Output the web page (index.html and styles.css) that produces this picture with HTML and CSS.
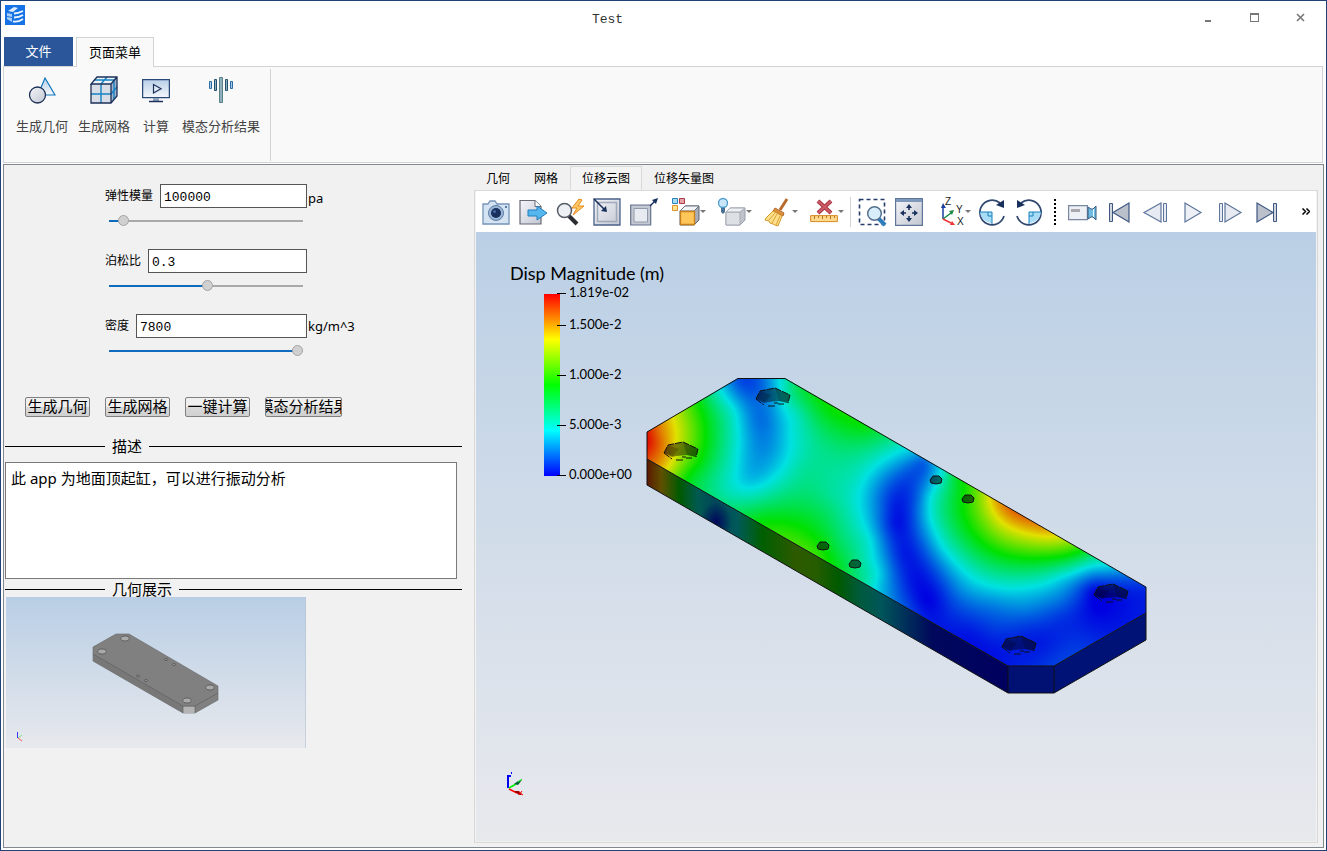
FILE: index.html
```
<!DOCTYPE html>
<html lang="zh-CN">
<head>
<meta charset="utf-8">
<title>Test</title>
<link rel="stylesheet" href="styles.css">
</head>
<body>
<div class="window">
  <header class="titlebar">
    <svg class="logo" viewBox="0 0 20 20" aria-hidden="true">
      <rect width="20" height="20" fill="#1673e6"/>
      <path d="M3 6l6-4 4 1-5 4z" fill="#dcebff"/>
      <path d="M2 8l5 1v8l-5-3z" fill="#a9cdfb"/>
      <path d="M9 8.500q4 0 9-2.500M9 12.500q5 0 9-2.500M8 16.500q5 1 10-2.500" stroke="#eef6ff" stroke-width="1.800" fill="none"/>
      <path d="M2 11.500l5 1" stroke="#1673e6"/>
    </svg>
    <h1 class="title">Test</h1>
    <div class="controls">
      <button type="button" aria-label="最小化"><svg viewBox="0 0 12 12"><path d="M2 8h6v2H2z" fill="#777"/></svg></button>
      <button type="button" aria-label="最大化"><svg viewBox="0 0 12 12"><path d="M1 1h9v9H1zM2 3v6h7V3z" fill="#777" fill-rule="evenodd"/></svg></button>
      <button type="button" aria-label="关闭"><svg viewBox="0 0 12 12"><path d="M2 2l7 7M9 2L2 9" stroke="#777" stroke-width="1.600"/></svg></button>
    </div>
  </header>

  <nav class="menu-tabs" role="tablist">
    <button type="button" class="menu-tab file">文件</button>
    <button type="button" class="menu-tab active" role="tab" aria-selected="true">页面菜单</button>
  </nav>

  <section class="ribbon">
    <div class="ribbon-group">
      <button type="button" class="ribbon-item">
        <svg viewBox="0 0 28 28"><defs><linearGradient id="soft" x2="0" y2="1"><stop stop-color="#b9cfe8"/><stop offset="1" stop-color="#f4f7fb"/></linearGradient><linearGradient id="gray" x2="1" y2="1"><stop stop-color="#f4f5f9"/><stop offset="1" stop-color="#c3c7d2"/></linearGradient></defs>
          <path d="M17 2l10 17H10z" fill="url(#soft)" stroke="#1178bd" stroke-width="1.200"/><circle cx="9.500" cy="19" r="8" fill="url(#gray)" stroke="#1d3158" stroke-width="1.300"/></svg>
        <span>生成几何</span>
      </button>
      <button type="button" class="ribbon-item">
        <svg viewBox="0 0 28 28"><path d="M1 8h20v19H1z" fill="#d9dde5"/><path d="M1 8l6-7h20l-6 7z" fill="#edf1f7"/><path d="M21 8l6-7v19l-6 7z" fill="#9fb2c9"/>
          <path d="M1 18h20l6-7M11 8v19M11 8l6-7M4 4h20v19" fill="none" stroke="#1482c4" stroke-width="1.400"/><path d="M1 8v19h20l6-7V1H7L1 8h20l6-7M21 8v19" fill="none" stroke="#1d3158" stroke-width="1.300"/></svg>
        <span>生成网格</span>
      </button>
      <button type="button" class="ribbon-item">
        <svg viewBox="0 0 28 28"><path d="M.6 3.600h26.800v18H.6z" fill="url(#soft)" stroke="#2c4a78" stroke-width="1.300"/><path d="M11.500 8.500v8.500l7.500-4.200z" fill="#dfe9f5" stroke="#1d3158" stroke-width="1.200"/><path d="M11 22h6v3h-6z" fill="#8ea3bd"/><path d="M7 25.500h14" stroke="#1d3158" stroke-width="1.500"/></svg>
        <span>计算</span>
      </button>
      <button type="button" class="ribbon-item">
        <svg viewBox="0 0 28 28"><g fill="#8fb0ba" stroke="#24506f"><path d="M12.500 1.500h3v25h-3z" stroke="#5a8187"/><path d="M7.500 3.500h2v11h-2zM18.500 3.500h2v11h-2z"/><path d="M2.500 5.500h2v7h-2zM23.500 5.500h2v7h-2z" fill="#a9cbe8" stroke="#2b6ca6"/></g></svg>
        <span>模态分析结果</span>
      </button>
    </div>
  </section>

  <main class="workspace">
    <section class="side">
      <form class="params">
        <div class="param">
          <div class="field"><label for="modulus">弹性模量</label><input id="modulus" type="text" value="100000"></div><span class="unit low">pa</span>
          <input type="range" aria-label="弹性模量" min="0" max="100" value="5" style="--fill:8%">
        </div>
        <div class="param">
          <div class="field"><label for="poisson">泊松比</label><input id="poisson" type="text" value="0.3"></div><span class="unit"></span>
          <input type="range" aria-label="泊松比" min="0" max="100" value="51" style="--fill:51%">
        </div>
        <div class="param">
          <div class="field"><label for="density">密度</label><input id="density" type="text" value="7800"></div><span class="unit">kg/m^3</span>
          <input type="range" aria-label="密度" min="0" max="100" value="100" style="--fill:98%">
        </div>
      </form>
      <div class="actions">
        <button type="button">生成几何</button>
        <button type="button">生成网格</button>
        <button type="button">一键计算</button>
        <button type="button" class="wide"><span>模态分析结果</span></button>
      </div>
      <h2 class="divider first"><label for="description">描述</label></h2>
      <textarea id="description" class="description" spellcheck="false">此 app 为地面顶起缸，可以进行振动分析</textarea>
      <h2 class="divider second">几何展示</h2>
      <svg class="preview" viewBox="0 0 300 151" role="img" aria-label="几何展示">
        <defs><linearGradient id="sky" x2="0" y2="1"><stop stop-color="#b9cee5"/><stop offset="1" stop-color="#e7e9ed"/></linearGradient></defs>
        <path d="M0 0h300v151H0z" fill="url(#sky)"/><path d="M299.500 0v151" stroke="#b5c3d3" opacity=".6"/>
        <path d="M87 50l23-13h13l89 52v14l-23 13h-12L87 64z" fill="#808080" stroke="#666" stroke-width=".6"/>
        <path d="M87 57l90 52v7L87 64z" fill="#787878"/><path d="M177 109.500h12v6.500h-12z" fill="#b4b4b4"/>
        <path d="M87 57l90 52h12l23-13M177 109v7M189 109v7" fill="none" stroke="#5a5a5a" stroke-width=".6"/>
        <g fill="#aaa" stroke="#5f5f5f"><ellipse cx="119" cy="41.500" rx="4.200" ry="2.500"/><ellipse cx="96" cy="54.500" rx="4.200" ry="2.500"/><ellipse cx="204" cy="90.500" rx="4.200" ry="2.500"/><ellipse cx="181" cy="103.500" rx="4.200" ry="2.500"/></g>
        <g fill="#999" stroke="#4c4c4c" stroke-width=".7"><ellipse cx="160" cy="62.500" rx="1.600" ry="1"/><ellipse cx="168" cy="67.500" rx="1.600" ry="1"/><ellipse cx="132" cy="79" rx="1.600" ry="1"/><ellipse cx="140" cy="83.500" rx="1.600" ry="1"/></g>
        <path d="M11.500 141v-6" stroke="#3838ff"/><path d="M12 141l4-3" stroke="#6fe48a"/><path d="M12 141l4 3" stroke="#f55"/>
      </svg>
    </section>

    <section class="result">
      <nav class="view-tabs" role="tablist">
        <button type="button" role="tab">几何</button>
        <button type="button" role="tab">网格</button>
        <button type="button" role="tab" class="active" aria-selected="true">位移云图</button>
        <button type="button" role="tab">位移矢量图</button>
      </nav>
      <div class="frame">
        <div class="toolbar" role="toolbar">
          <button type="button" class="tool" aria-label="截图"><svg viewBox="0 0 28 28"><path d="M1 5h5l2-3h5l2 3h12v20H1z" transform="translate(0 1)" fill="#d5e4f3" stroke="#7593b8" stroke-width="1.300"/><circle cx="14" cy="15" r="7.500" fill="#9cb6d6" stroke="#5d7ca8"/><circle cx="14" cy="15" r="5" fill="#17305e"/><circle cx="12.500" cy="13.500" r="1.500" fill="#4469a3"/><circle cx="24" cy="9" r="1" fill="#31568a"/></svg></button>
          <button type="button" class="tool" aria-label="导出"><svg viewBox="0 0 28 28"><path d="M1 2.500h15l6 6V26H1z" fill="url(#gray)" stroke="#666b76" stroke-width="1.200"/><path d="M16 2.500v6h6" fill="#fff" stroke="#666b76"/><path d="M9 12h9V8l10 7-10 7v-4H9z" fill="#55b7ee" stroke="#227fbd"/></svg></button>
          <button type="button" class="tool" aria-label="快速缩放"><svg viewBox="0 0 28 28"><path d="M13 18l8 8" stroke="#2b2d33" stroke-width="4"/><circle cx="8.500" cy="12.500" r="7" fill="#edf1f5" stroke="#555b66" stroke-width="1.500"/><path d="M23 1l-7 9h5l-4 7 11-9h-6l4-6z" fill="#ffc763" stroke="#e58a1f"/></svg></button>
          <button type="button" class="tool" aria-label="适应窗口"><svg viewBox="0 0 28 28"><path d="M1 1h26v26H1z" fill="url(#gray)" stroke="#4b628a" stroke-width="1.300"/><path d="M4.500 4.500h19v19h-19z" fill="none" stroke="#a0a9b9" stroke-width="1.500"/><path d="M1 1l11 11" stroke="#19305c" stroke-width="1.500"/><path d="M14 14l-1-6-5 5z" fill="#19305c"/></svg></button>
          <button type="button" class="tool" aria-label="放大窗口"><svg viewBox="0 0 28 28"><path d="M.7 7h20v20H.7z" fill="#c3c8d2" stroke="#66738c" stroke-width="1.200"/><path d="M4 10.500h13.500V24H4z" fill="#e7eaf0" stroke="#929baa"/><path d="M20 8l5-5" stroke="#19305c" stroke-width="1.500"/><path d="M28 0l-2 6-4-4z" fill="#19305c"/></svg></button>
          <button type="button" class="tool drop" aria-label="着色"><svg viewBox="0 0 28 28"><path d="M.5.500h5v5h-5z" fill="#a8dcf5" stroke="#2a83b7"/><path d="M7.500.500h5v5h-5z" fill="#e8a2a6" stroke="#ab3c4a"/><path d="M.5 7.500h5v5h-5z" fill="#ffe38f" stroke="#df922b"/><path d="M8 13l5-5h14v14l-5 5H8z" fill="#a9adb7" stroke="#5f6472"/><path d="M8 13l5-5h14l-5 5z" fill="#f3f4f7" stroke="#6d7280"/><path d="M8.500 13.500h14v13h-14z" fill="#ffc65a" stroke="#c98119" stroke-width="1.300"/></svg><i></i></button>
          <button type="button" class="tool drop" aria-label="光照"><svg viewBox="0 0 28 28"><circle cx="5" cy="5" r="4.500" fill="#c8e7fa" stroke="#4b9bcb" stroke-width="1.300"/><path d="M3 10h4v4l-2 2-2-2z" fill="#4a7294"/><path d="M8 14l4-4h15v12l-5 5H8z" fill="#bfc4cc" stroke="#969ca6"/><path d="M8 14h14v13H8z" fill="#dde0e5" stroke="#a5aab4"/><path d="M8 14l4-4h15l-5 4z" fill="#eef0f3" stroke="#a5aab4"/></svg><i></i></button>
          <button type="button" class="tool drop" aria-label="清除"><svg viewBox="0 0 28 28"><path d="M23 1l-7 11" stroke="#b66c2e" stroke-width="3"/><path d="M11 10l9 5-1 3-10-5z" fill="#db903c" stroke="#b66c2e"/><path d="M9 13l9 5-4 10-3-1-2-1-3-1-1-2-4-1 1-2z" fill="#ffe08a" stroke="#d8992c"/><path d="M11 15l-6 7M13 16l-5 9M16 18l-4 9" stroke="#dba23b" fill="none"/></svg><i></i></button>
          <button type="button" class="tool drop" aria-label="删除标尺"><svg viewBox="0 0 28 28"><path d="M8 3l13 12M21 3L8 15" stroke="#a93542" stroke-width="4"/><path d="M8 3l13 12M21 3L8 15" stroke="#cc5b66" stroke-width="2"/><path d="M.6 17.600h26.800v6H.6z" fill="#ffd88b" stroke="#d68a27"/><path d="M4.500 18v3M8.500 18v2M12.500 18v3M16.500 18v2M20.500 18v3M24.500 18v2" stroke="#b9741e"/></svg><i></i></button>
          <span class="rule"></span>
          <button type="button" class="tool" aria-label="框选缩放"><svg viewBox="0 0 28 28"><path d="M1.500 1.500h25v25h-25z" fill="none" stroke="#263d69" stroke-width="1.600" stroke-dasharray="4 3"/><path d="M20 20l7 7" stroke="#2f7dbc" stroke-width="4"/><circle cx="16.500" cy="15.500" r="6.800" fill="#d8eefa" stroke="#55708e" stroke-width="1.500"/></svg></button>
          <button type="button" class="tool" aria-label="平移"><svg viewBox="0 0 28 28"><path d="M.6.6h26.800v26.800H.6z" fill="url(#gray)" stroke="#5f7698" stroke-width="1.200"/><path d="M1 1h26v3H1z" fill="#7e98bb"/><path d="M14 8v4m0 6v4M7 15h4m6 0h4" stroke="#19305c" stroke-width="1.600"/><path d="M14 6l-3 4h6zM14 24l-3-4h6zM5 15l4-3v6zM23 15l-4-3v6z" fill="#19305c"/></svg></button>
          <button type="button" class="tool drop" aria-label="视图方向"><svg viewBox="0 0 28 28"><path d="M6 21V8" stroke="#1d3f9e" stroke-width="1.500"/><path d="M6 5l-2 5h5z" fill="#1d3f9e"/><path d="M6 21l8-6" stroke="#1a8a43" stroke-width="1.500"/><path d="M17 12l-5 1 3 4z" fill="#1a8a43"/><path d="M6 21l8 4" stroke="#e33" stroke-width="1.500"/><path d="M18 27l-3-4-2 4z" fill="#e33"/><g class="axis"><text x="8" y="7">Z</text><text x="19" y="15">Y</text><text x="20" y="27">X</text></g></svg><i></i></button>
          <button type="button" class="tool" aria-label="顺时针旋转"><svg viewBox="0 0 28 28"><path d="M22 5A12.300 12.300 0 1 0 26 18" fill="none" stroke="#30476f" stroke-width="1.700"/><path d="M26 2v8l-8-3z" fill="#19305c"/><path d="M2 14h12v11A12 12 0 0 1 2 14z" fill="#a8dcf7"/><path d="M1 14h13v12M10 14v4h4" fill="none" stroke="#1880bd"/></svg></button>
          <button type="button" class="tool" aria-label="逆时针旋转"><svg viewBox="0 0 28 28"><path d="M2 18A12.300 12.300 0 1 0 6 5" fill="none" stroke="#30476f" stroke-width="1.700"/><path d="M2 2v8l8-3z" fill="#19305c"/><path d="M26 14H14v11A12 12 0 0 0 26 14z" fill="#a8dcf7"/><path d="M27 14H14v12M18 14v4h-4" fill="none" stroke="#1880bd"/></svg></button>
          <span class="grip"></span>
          <button type="button" class="tool" aria-label="录像"><svg viewBox="0 0 28 28"><path d="M.6 7.600h18.800v14H.6z" fill="#edf0f5" stroke="#7987a1" stroke-width="1.200"/><path d="M3 11h9v3H3z" fill="#a9a9ad"/><path d="M20 9l3 2h2l3-3v14l-3-3h-2l-3 2z" fill="#6fbbe2" stroke="#36597f"/><path d="M25.500 11v8" stroke="#e9f6fd"/></svg></button>
          <button type="button" class="tool" aria-label="第一帧"><svg viewBox="0 0 28 28"><path d="M4.500 5.500h3v18h-3z" fill="#d0d4dc" stroke="#3e5783"/><path d="M24 5v19L8 14.500z" fill="#bbc1cb" stroke="#3e5783" stroke-width="1.200"/></svg></button>
          <button type="button" class="tool" aria-label="上一帧"><svg viewBox="0 0 28 28"><path d="M21.500 5.500h3v18h-3z" fill="#e7eaf0" stroke="#5e759b"/><path d="M19 5v19L2 14.500z" fill="#e7eaf0" stroke="#5e759b" stroke-width="1.200"/></svg></button>
          <button type="button" class="tool" aria-label="播放"><svg viewBox="0 0 28 28"><path d="M6 5v19l16-9.500z" fill="#edf1f6" stroke="#5e759b" stroke-width="1.200"/></svg></button>
          <button type="button" class="tool" aria-label="下一帧"><svg viewBox="0 0 28 28"><path d="M3.500 5.500h3v18h-3z" fill="#e7eaf0" stroke="#5e759b"/><path d="M9 5v19l16-9.500z" fill="#e7eaf0" stroke="#5e759b" stroke-width="1.200"/></svg></button>
          <button type="button" class="tool" aria-label="最后一帧"><svg viewBox="0 0 28 28"><path d="M20.500 5.500h3v18h-3z" fill="#d0d4dc" stroke="#3e5783"/><path d="M4 5v19l16-9.500z" fill="#bbc1cb" stroke="#3e5783" stroke-width="1.200"/></svg></button>
          <button type="button" class="more" aria-label="更多"><svg viewBox="0 0 8 7"><path d="M.5.500l3 3-3 3M4.500.500l3 3-3 3" fill="none" stroke="#000" stroke-width="1.500"/></svg></button>
        </div>
        <div class="viewport">
          <svg class="legend" viewBox="0 0 170 220" role="img" aria-label="Disp Magnitude">
            <defs><linearGradient id="rainbow" x2="0" y2="1"><stop stop-color="#f00"/><stop offset=".25" stop-color="#ff0"/><stop offset=".5" stop-color="#0f0"/><stop offset=".75" stop-color="#0ff"/><stop offset="1" stop-color="#00f"/></linearGradient></defs>
            <text class="legend-title" x="0" y="15">Disp Magnitude (m)</text>
            <path d="M34 29h16v182H34z" fill="url(#rainbow)"/>
            <path d="M47 28.500h9M47 60.500h9M47 110.500h9M47 160.500h9M47 210.500h9" stroke="#000"/>
            <g class="legend-tick"><text x="59" y="32">1.819e-02</text><text x="59" y="64">1.500e-2</text><text x="59" y="114">1.000e-2</text><text x="59" y="164">5.000e-3</text><text x="59" y="214">0.000e+00</text></g>
          </svg>
          <div class="plate">
            <canvas id="field" width="501" height="318"></canvas>
            <svg viewBox="646 377 501 318" aria-hidden="true">
              <defs>
                <linearGradient id="edge" gradientUnits="userSpaceOnUse" x1="647" x2="1008" y1="0" y2="0">
                  <stop stop-color="#5a1900"/><stop offset=".04" stop-color="#5f5000"/><stop offset=".09" stop-color="#005a00"/><stop offset=".14" stop-color="#005a50"/><stop offset=".19" stop-color="#00465a"/><stop offset=".25" stop-color="#005a5a"/><stop offset=".32" stop-color="#005f00"/><stop offset=".41" stop-color="#2d5a00"/><stop offset=".47" stop-color="#265c00"/><stop offset=".53" stop-color="#005a00"/><stop offset=".59" stop-color="#005a3c"/><stop offset=".65" stop-color="#00555a"/><stop offset=".72" stop-color="#002d5a"/><stop offset=".79" stop-color="#00085c"/><stop offset="1" stop-color="#00005f"/>
                </linearGradient>
                <radialGradient id="spot"><stop stop-color="#00085a"/><stop offset="1" stop-color="#00085a" stop-opacity="0"/></radialGradient>
                <clipPath id="edge-clip"><path d="M647 459l361 207v27L647 485z"/></clipPath>
                <g id="socket">
                  <path d="M-13-7L2-10 17-3 15 5 6 3-5 4-9 5-17 1z" fill="#000" fill-opacity=".45"/>
                  <path d="M-13-7l11 4-6 7-9-3zM2-10l4 13 9 2 2-8z" fill="#000" fill-opacity=".2"/>
                  <path d="M-17 1l4-8L2-10 17-3l-2 8M-17 1l8 6M-5 8h8m2-2h6m-10-1h4" fill="none" stroke="#111" stroke-dasharray="7 1"/>
                </g>
                <path id="pin" d="M-6 0l3-4h6l3 3-1 4-5 1-5-1z" fill="#000" fill-opacity=".55" stroke="#111"/>
              </defs>
              <path d="M647 459l361 207v27L647 485z" fill="url(#edge)"/>
              <ellipse cx="716" cy="522" rx="16" ry="20" fill="url(#spot)" clip-path="url(#edge-clip)"/>
              <path d="M1008 666h46v27h-46z" fill="#001073"/>
              <path d="M1054 666l92-53v27l-92 53z" fill="#001276"/>
              <path d="M647 459l361 207h46l92-53M1008 666v27M1054 666v27" fill="none" stroke="#111"/>
              <path d="M647 432v53l361 208h46l92-53v-53L785 378.500h-47z" fill="none" stroke="#111"/>
              <use href="#socket" x="681" y="452"/><use href="#socket" x="773" y="398"/><use href="#socket" x="1111" y="594"/><use href="#socket" x="1019" y="646"/>
              <use href="#pin" x="823" y="546"/><use href="#pin" x="855" y="564"/><use href="#pin" x="936" y="480"/><use href="#pin" x="968" y="499"/>
            </svg>
          </div>
          <svg class="triad" viewBox="0 0 20 28" aria-hidden="true"><path d="M3 17V6" stroke="#00e" stroke-width="2"/><path d="M2 5h4M6 2h1" stroke="#00e" stroke-width="2"/><path d="M4 17l7-4" stroke="#0e0" stroke-width="1.500"/><path d="M9 13l4-3 4-1-4 5z" fill="#063"/><path d="M13 11l4-3" stroke="#0f0"/><path d="M4 18l8 4" stroke="#f00" stroke-width="1.500"/><path d="M9 20l5 4h3l-3-4z" fill="#900"/><path d="M14 21l4 3M17 20l-3 4" stroke="#f00"/></svg>
        </div>
      </div>
    </section>
  </main>
</div>
<script src="field.js"></script>
</body>
</html>
```
FILE: styles.css
```
* { box-sizing: border-box; }
body {
  margin: 0;
  background: #fff;
  color: #000;
  font: 13px/18px "Noto Sans", "Noto Sans CJK SC", sans-serif;
}
button { margin: 0; padding: 0; border: 0; background: none; color: inherit; font: inherit; }
svg { display: block; }

.window {
  display: flex;
  flex-direction: column;
  min-height: 100vh;
  padding: 0 2px 2px;
  border: 1px solid #1f4277;
}

.titlebar { display: flex; align-items: flex-start; height: 36px; }
.logo { width: 20px; height: 20px; margin: 4px 0 0 2px; }
.title {
  flex: 1;
  margin: 10px 0 0 4px;
  color: #333;
  text-align: center;
  font: 13px/18px "Liberation Mono", monospace;
}
.controls { display: flex; }
.controls button { width: 46px; height: 36px; padding: 11px 17px 13px; }
.controls svg { width: 12px; height: 12px; }

.menu-tabs { display: flex; gap: 3px; padding-left: 1px; }
.menu-tab { height: 29px; padding: 0 12px 2px; }
.menu-tab.file { width: 69px; background: #2b579a; color: #fff; }
.menu-tab.active {
  position: relative;
  height: 30px;
  margin-bottom: -1px;
  border: 1px solid #d3d3d3;
  border-bottom: 0;
  background: #f9f9f9;
}

.ribbon {
  height: 97px;
  margin-right: 1px;
  padding: 2px 7px;
  border: 1px solid #d3d3d3;
  background: #f9f9f9;
}
.ribbon-group {
  display: inline-flex;
  height: 92px;
  padding-right: 5px;
  border-right: 1px solid #d3d3d3;
}
.ribbon-item {
  display: flex;
  flex-direction: column;
  align-items: center;
  gap: 13px;
  min-width: 42px;
  padding: 7px 5px 0;
  color: #444;
}
.ribbon-item svg { width: 28px; height: 28px; }

.workspace {
  display: flex;
  flex: 1;
  margin-top: 1px;
  border: 1px solid #828790;
  background: #f1f1f1;
}
.side { width: 470px; padding: 19px 12px 0 1px; }
.params { display: flex; flex-direction: column; gap: 22px; padding-left: 100px; }
.param { display: grid; grid-template-columns: 202px 1fr; row-gap: 6px; column-gap: 1px; }
.field { display: flex; gap: 7px; font-size: 12px; line-height: 24px; }
.field input {
  flex: 1;
  min-width: 0;
  height: 24px;
  padding: 2px 3px 0;
  border: 1px solid #555;
  background: #fff;
  font: 13px/20px "Liberation Mono", monospace;
}
.unit { line-height: 24px; }
.unit.low { padding-top: 4px; line-height: 20px; }
.param input[type="range"] {
  appearance: none;
  width: 194px;
  height: 13px;
  margin: 0 4px;
  background: linear-gradient(90deg, #0f6cbd var(--fill), #a9a9a9 var(--fill)) center / 100% 2px no-repeat;
}
.param input[type="range"]::-webkit-slider-thumb {
  appearance: none;
  width: 11px;
  height: 11px;
  border: 1px solid #a5a5a5;
  border-radius: 50%;
  background: #d0d0d0;
}

.actions { display: flex; gap: 15px; margin: 40px 0 22px; padding-left: 20px; }
.actions button {
  display: flex;
  justify-content: center;
  width: 65px;
  height: 20px;
  overflow: hidden;
  border: 1px solid #808080;
  border-radius: 2px;
  background: linear-gradient(#f0f0f0 50%, #dadada 50%, #d0d0d0);
  font-size: 15px;
  line-height: 16px;
  white-space: nowrap;
}
.actions .wide { width: 77px; }

.divider {
  display: flex;
  align-items: center;
  gap: 7px;
  margin: 0;
  font-size: 15px;
  font-weight: 400;
  line-height: 15px;
}
.divider::before { content: ""; width: 100px; height: 1px; background: #000; }
.divider::after { content: ""; flex: 1; height: 1px; background: #000; }
.divider.first { margin-bottom: 8px; }
.divider.second { margin-top: 3px; }
.description {
  display: block;
  width: calc(100% - 5px);
  height: 117px;
  padding: 5px;
  border: 1px solid #7a7a7a;
  background: #fff;
  resize: none;
  font: 15px/20px "Noto Sans", "Noto Sans CJK SC", sans-serif;
}
.preview { width: 300px; height: 151px; margin-left: 1px; }

.result { display: flex; flex: 1; flex-direction: column; min-width: 0; padding: 1px 5px 4px 0; }
.view-tabs { display: flex; height: 24px; }
.view-tabs button {
  padding: 0 11px;
  border: 1px solid transparent;
  border-bottom: 0;
  font-size: 12px;
}
.view-tabs .active { border-color: #d9d9d9; background: #f4f4f4; }
.frame { display: flex; flex: 1; flex-direction: column; padding: 0 1px 1px; border: 1px solid #d9d9d9; }
.toolbar { display: flex; align-items: center; height: 41px; padding-left: 1px; background: #fff; }
.tool { display: flex; flex: none; align-items: center; justify-content: center; width: 37px; height: 36px; }
.tool svg { flex: none; width: 28px; height: 28px; overflow: visible; }
.tool.drop { justify-content: flex-start; width: 46px; padding-left: 10px; }
.tool.drop i { border: 3px solid transparent; border-top-color: #777; border-bottom: 0; }
.axis { font: 10px "Liberation Sans", sans-serif; fill: #222; }
.rule { width: 1px; height: 30px; margin: 0 2px 0 4px; background: #d3d3d3; }
.grip { width: 2px; height: 26px; margin: 0 7px; background: repeating-linear-gradient(#000 0 2px, transparent 2px 4px); }
.more { width: 8px; margin: 0 6px 0 auto; }
.more svg { width: 8px; height: 7px; }

.viewport { position: relative; flex: 1; overflow: hidden; background: linear-gradient(#bacfe5, #e8e9ed); }
.legend { position: absolute; left: 34px; top: 33px; width: 170px; height: 220px; overflow: visible; }
.legend-title { font: 18px Lato, sans-serif; }
.legend-tick { font: 13px Lato, sans-serif; }
.plate { position: absolute; left: calc(50% - 250px); top: calc(50% - 160px); width: 501px; height: 318px; }
.plate canvas { display: block; }
.plate svg { position: absolute; inset: 0; width: 501px; height: 318px; }
.triad { position: absolute; left: 29px; bottom: 42px; width: 20px; height: 28px; }
```
FILE: field.js
```
// Displacement magnitude on the top face: nodes as [x, y, value], value 0..1 of the maximum.
const nodes = [
  [650,440,.97],[647,457,.93],[658,432,.88],[662,450,.86],[675,427,.75],[670,463,.75],[673,443,.77],
  [698,403,.5],[705,430,.5],[698,463,.5],[687,477,.5],[722,392,.25],[733,410,.26],[737,437,.26],[733,467,.27],[720,473,.33],[727,490,.3],
  [740,380,.08],[747,385,.08],[763,387,.12],[760,420,.12],[763,447,.15],[753,473,.19],[745,483,.23],
  [777,383,.23],[785,410,.25],[790,433,.25],[786,460,.25],[772,478,.25],[797,413,.3],[807,433,.32],[803,470,.33],[777,493,.34],
  [797,393,.39],[823,410,.47],[843,417,.5],[863,427,.48],[883,437,.38],[837,433,.42],[830,460,.34],[863,453,.34],
  [830,493,.33],[853,480,.29],[857,507,.26],[870,540,.25],[877,573,.25],
  [780,507,.42],[747,503,.35],[763,520,.49],[790,523,.5],[797,540,.56],[817,553,.55],[810,533,.5],[837,547,.42],[843,563,.43],[843,533,.36],[863,580,.33],[863,560,.31],[827,510,.38],
  [860,447,.37],[870,463,.28],[897,447,.28],[893,467,.17],[910,455,.19],[923,463,.1],[877,480,.18],[880,510,.12],[887,560,.14],
  [900,483,.07],[893,503,.04],[895,523,.02],[903,553,.03],[913,577,.02],[927,600,0],[950,613,.05],[970,630,.03],[993,650,.02],[893,590,.13],[877,587,.23],[910,607,.07],
  [918,497,.12],[915,530,.09],[932,563,.1],[960,590,.15],[993,603,.15],[1027,607,.15],[1060,597,.14],
  [935,470,.2],[928,497,.23],[930,517,.25],[943,547,.25],[963,570,.25],[993,586,.25],[1027,587,.25],[1060,577,.25],[1107,567,.22],[943,473,.28],
  [953,477,.42],[963,487,.5],[960,513,.48],[973,533,.5],[1000,553,.5],[1033,558,.5],[1073,553,.5],[1090,556,.37],
  [977,490,.62],[983,520,.62],[988,497,.74],[997,517,.75],[1020,530,.76],[1060,538,.72],[995,499,.81],[1010,508,.89],[1033,521,.87],[1047,530,.81],[1077,547,.56],
  [993,630,.06],[1027,630,.05],[1060,617,.06],[1093,590,.01],[1080,597,.06],[1110,577,.11],[1143,587,.05],[1113,610,.01],[1143,610,.03],[1060,660,.07],[1077,643,.06],[1047,663,.06],[1010,663,.03],[1043,643,.03]
].map(([x, y, v]) => [x / 100, y / 100, v]);

const kernel = d2 => (d2 > 0 ? d2 * Math.log(d2) : 0);
const basis = (x, y) => [...nodes.map(([a, b]) => kernel((a - x) ** 2 + (b - y) ** 2)), 1, x, y];

// Thin-plate spline weights by Gaussian elimination with pivoting.
function solve() {
  const n = nodes.length + 3;
  const m = nodes.map(([x, y, v], i) => {
    const row = [...basis(x, y), v];
    row[i] += 0.003;
    return row;
  });
  for (let k = 0; k < 3; k++) m.push([...nodes.map(p => (k ? p[k - 1] : 1)), 0, 0, 0, 0]);
  for (let c = 0; c < n; c++) {
    let p = c;
    for (let r = c + 1; r < n; r++) if (Math.abs(m[r][c]) > Math.abs(m[p][c])) p = r;
    [m[c], m[p]] = [m[p], m[c]];
    for (let r = 0; r < n; r++) {
      if (r === c) continue;
      const f = m[r][c] / m[c][c];
      for (let k = c; k <= n; k++) m[r][k] -= f * m[c][k];
    }
  }
  return m.map((row, i) => row[n] / row[i]);
}

const weights = solve();
const canvas = document.getElementById("field");
const ctx = canvas.getContext("2d");
const { width, height } = canvas;
const step = 4;
const cols = Math.ceil(width / step) + 2;
const rows = Math.ceil(height / step) + 2;
const grid = [];
for (let j = 0; j < rows; j++) {
  for (let i = 0; i < cols; i++) {
    const b = basis((646 + i * step) / 100, (377 + j * step) / 100);
    grid.push(b.reduce((sum, v, k) => sum + v * weights[k], 0));
  }
}

const image = ctx.createImageData(width, height);
const clamp = v => Math.max(0, Math.min(1, v));
for (let y = 0; y < height; y++) {
  for (let x = 0; x < width; x++) {
    const i = Math.floor(x / step), j = Math.floor(y / step);
    const u = x / step - i, v = y / step - j, g = j * cols + i;
    const s = clamp((grid[g] * (1 - u) + grid[g + 1] * u) * (1 - v) + (grid[g + cols] * (1 - u) + grid[g + cols + 1] * u) * v) * 4;
    const o = (y * width + x) * 4;
    image.data[o] = 225 * clamp(s - 2);
    image.data[o + 1] = 225 * Math.min(clamp(s), clamp(4 - s));
    image.data[o + 2] = 225 * clamp(2 - s);
    image.data[o + 3] = 255;
  }
}
const buffer = document.createElement("canvas");
buffer.width = width;
buffer.height = height;
buffer.getContext("2d").putImageData(image, 0, 0);
const outline = [[647,432],[738,378],[785,378],[1146,587],[1146,613],[1054,666],[1008,666],[647,459]];
ctx.beginPath();
outline.forEach(([x, y]) => ctx.lineTo(x - 646, y - 377));
ctx.clip();
ctx.drawImage(buffer, 0, 0);
```
